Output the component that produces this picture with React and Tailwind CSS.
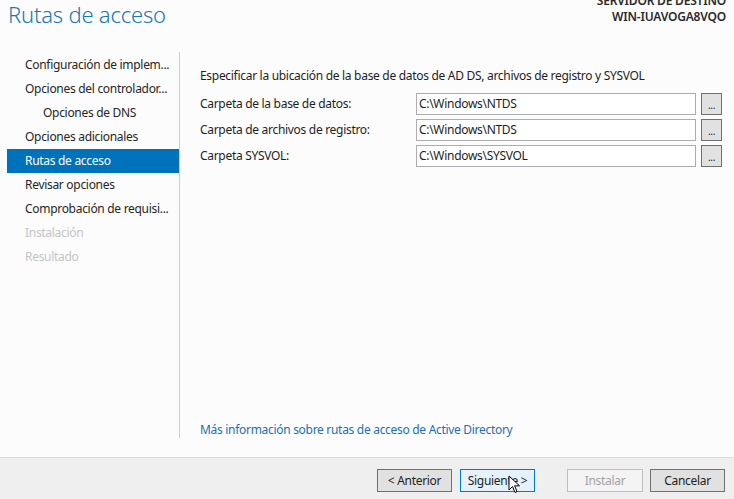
import React from 'react';

const font = { fontFamily: '"Noto Sans", "Open Sans", sans-serif' };

const steps = [
    { label: 'Configuración de implem...', indent: false },
    { label: 'Opciones del controlador...', indent: false },
    { label: 'Opciones de DNS', indent: true },
    { label: 'Opciones adicionales', indent: false },
    { label: 'Rutas de acceso', indent: false, active: true },
    { label: 'Revisar opciones', indent: false },
    { label: 'Comprobación de requisi...', indent: false },
    { label: 'Instalación', indent: false, disabled: true },
    { label: 'Resultado', indent: false, disabled: true },
];

const fields = [
    { label: 'Carpeta de la base de datos:', value: 'C:\\Windows\\NTDS' },
    { label: 'Carpeta de archivos de registro:', value: 'C:\\Windows\\NTDS' },
    { label: 'Carpeta SYSVOL:', value: 'C:\\Windows\\SYSVOL' },
];

const Cursor = () => (
    <svg width="14" height="20" viewBox="0 0 14 20" className="absolute left-[48px] top-[6px] pointer-events-none">
        <path d="M1 1 L1 15 L4.5 11.5 L7 17.5 L9 16.6 L6.6 10.8 L11.5 10.8 Z" fill="#fff" stroke="#000" strokeWidth="1" strokeLinejoin="round" />
    </svg>
);

export default function App() {
    return (
        <div className="w-[734px] h-[499px] bg-[#fcfcfc] flex flex-col overflow-hidden text-[12px] tracking-[-0.3px] text-[#1e1e1e]" style={font}>
            {/* header */}
            <div className="h-[52px] flex justify-between shrink-0">
                <div className="pl-[8px] pt-[1px] text-[22px] font-light text-[#1a77b5] leading-[26px] tracking-[-0.2px]">Rutas de acceso</div>
                <div className="pr-[8px] -mt-[7px] text-right text-[12px] font-semibold leading-[16px] tracking-[-0.2px] text-[#2a2a2a]">
                    <div>SERVIDOR DE DESTINO</div>
                    <div>WIN-IUAVOGA8VQO</div>
                </div>
            </div>

            {/* body */}
            <div className="flex-1 flex">
                <div className="w-[179px] shrink-0 pl-[7px] pt-[1px] flex flex-col">
                    {steps.map((s, i) => (
                        <div
                            key={i}
                            className={`h-[24px] leading-[24px] whitespace-nowrap ${s.indent ? 'pl-[36px]' : 'pl-[18px]'} ${s.active ? 'bg-[#0072bc] text-white' : s.disabled ? 'text-[#c4c4c4]' : 'text-[#262626]'}`}
                        >
                            {s.label}
                        </div>
                    ))}
                </div>
                <div className="w-px bg-[#cfcfcf] mb-[19px]" />
                <div className="flex-1 flex flex-col pl-[20px] pr-[12px] pt-[16px] pb-[19px]">
                    <div className="leading-[16px]">Especificar la ubicación de la base de datos de AD DS, archivos de registro y SYSVOL</div>
                    <div className="mt-[9px] flex flex-col gap-[4px]">
                        {fields.map((f, i) => (
                            <div key={i} className="flex items-center h-[22px]">
                                <div className="w-[216px] shrink-0">{f.label}</div>
                                <div className="w-[280px] h-[22px] border border-[#abadb3] bg-white px-[2px] leading-[20px] text-[#1e1e1e]">{f.value}</div>
                                <button className="ml-[5px] w-[21px] h-[22px] border border-[#707070] bg-[#e1e1e1] text-[10px] leading-[14px] flex items-start justify-center pt-[4px]">...</button>
                            </div>
                        ))}
                    </div>
                    <div className="mt-auto text-[#1c6fb7] leading-[16px]">Más información sobre rutas de acceso de Active Directory</div>
                </div>
            </div>

            {/* footer */}
            <div className="h-[42px] shrink-0 border-t border-[#dadada] bg-[#efefef] flex items-start pt-[11px] pr-[9px] justify-end">
                <button className="w-[75px] h-[23px] border border-[#707070] bg-[#e1e1e1] leading-[21px]">&lt; Anterior</button>
                <div className="relative ml-[8px]">
                    <button className="w-[75px] h-[23px] border border-[#0078d7] bg-[#e5f1fb] leading-[21px]">Siguiente &gt;</button>
                    <Cursor />
                </div>
                <button className="ml-[32px] w-[76px] h-[23px] border border-[#bfbfbf] bg-[#f4f4f4] text-[#a3a3a3] leading-[21px]">Instalar</button>
                <button className="ml-[7px] w-[75px] h-[23px] border border-[#707070] bg-[#e1e1e1] leading-[21px]">Cancelar</button>
            </div>
        </div>
    );
}
